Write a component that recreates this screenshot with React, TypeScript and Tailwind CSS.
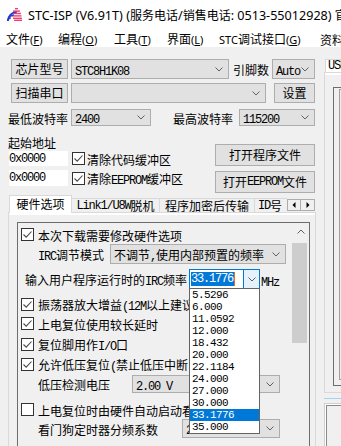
import React from "react";

const CJK_SPLIT = /([\u2E80-\u9FFF\uFF00-\uFFEF\u3000-\u303F]+)/;
const CJK_TEST = /[\u2E80-\u9FFF\uFF00-\uFFEF\u3000-\u303F]/;

function T({
  s,
  cjk = "font-['Noto_Sans_CJK_SC',sans-serif] text-[12px]",
  lat = "font-['Liberation_Mono',monospace] text-[12px] tracking-[-1.2px]",
}: {
  s: string;
  cjk?: string;
  lat?: string;
}) {
  const parts = s.split(CJK_SPLIT).filter((p) => p.length > 0);
  return (
    <>
      {parts.map((p, i) =>
        CJK_TEST.test(p) ? (
          <span key={i} className={cjk}>
            {p}
          </span>
        ) : (
          <span key={i} className={lat + " whitespace-pre"}>
            {p}
          </span>
        )
      )}
    </>
  );
}

function Chev({ up = false }: { up?: boolean }) {
  return (
    <svg width="8" height="5" viewBox="0 0 8 5" className="shrink-0">
      <path
        d={up ? "M0.5 4.5 L4 1 L7.5 4.5" : "M0.5 0.5 L4 4 L7.5 0.5"}
        fill="none"
        stroke="#606060"
        strokeWidth="1"
      />
    </svg>
  );
}

function Box({ checked = true, className = "" }: { checked?: boolean; className?: string }) {
  return (
    <div className={"w-[13px] h-[13px] border border-[#333333] bg-white shrink-0 " + className}>
      {checked && (
        <svg width="11" height="11" viewBox="0 0 11 11">
          <path d="M1.5 5.5 L4.2 8.2 L9.5 2.5" fill="none" stroke="#4a4a4a" strokeWidth="1.1" />
        </svg>
      )}
    </div>
  );
}

function Btn({ children, className = "" }: { children: React.ReactNode; className?: string }) {
  return (
    <div
      className={
        "bg-[#e1e1e1] border border-[#adadad] flex items-center justify-center whitespace-nowrap shrink-0 " +
        className
      }
    >
      {children}
    </div>
  );
}

function Combo({ text, className = "" }: { text: string; className?: string }) {
  return (
    <div
      className={
        "bg-[#e1e1e1] border border-[#adadad] flex items-center justify-between pl-[3px] pr-[5px] whitespace-nowrap overflow-hidden shrink-0 " +
        className
      }
    >
      <span className="leading-none">
        <T s={text} />
      </span>
      <Chev />
    </div>
  );
}

function CB({ s, checked = true, className = "" }: { s: string; checked?: boolean; className?: string }) {
  return (
    <div className={"flex items-center h-[13px] whitespace-nowrap " + className}>
      <Box checked={checked} className="ml-[3px]" />
      <span className="ml-[4px] leading-none">
        <T s={s} />
      </span>
    </div>
  );
}

function Logo() {
  return (
    <svg width="15" height="13" viewBox="0 0 15 13" className="ml-[7px] shrink-0">
      <g fill="#f0406e">
        <rect x="8" y="0" width="3" height="1.4" />
        <rect x="6" y="2.4" width="7" height="1.4" />
        <rect x="4.5" y="4.8" width="9.5" height="1.4" />
        <rect x="4.5" y="7.2" width="10" height="1.4" />
        <rect x="6" y="9.6" width="9" height="1.4" />
        <rect x="7" y="11.6" width="8" height="1.4" />
      </g>
      <g fill="none" stroke="#1e3ed0" strokeWidth="1.5">
        <path d="M0.8 13 A3 3 0 0 1 3.8 10" />
        <path d="M0.8 13 A6 6 0 0 1 6.8 7" />
        <path d="M0.8 13 A9 9 0 0 1 9.8 4" />
      </g>
    </svg>
  );
}

const menuC = "font-['Noto_Sans_CJK_SC',sans-serif] text-[12px]";
const menuL = "font-['Noto_Sans',sans-serif] text-[11px]";
const listL = "font-['Liberation_Mono',monospace] text-[11px] tracking-[-0.6px] leading-[12px]";

function MenuItem({ label, k, className }: { label: string; k: string; className: string }) {
  return (
    <div className={"flex items-center whitespace-nowrap leading-none shrink-0 " + className}>
      <T s={label} cjk={menuC} lat={menuL} />
      <span className={menuL}>
        (<span className="underline">{k}</span>)
      </span>
    </div>
  );
}

const freqs = [
  "5.5296",
  "6.000",
  "11.0592",
  "12.000",
  "18.432",
  "20.000",
  "22.1184",
  "24.000",
  "27.000",
  "30.000",
  "33.1776",
  "35.000",
];

export default function App() {
  return (
    <div className="w-[341px] h-[446px] overflow-hidden bg-[#f0f0f0] relative flex flex-col text-black">
      {/* Title bar */}
      <div className="h-[28px] bg-white flex items-center whitespace-nowrap overflow-hidden shrink-0">
        <Logo />
        <span className="ml-[6px] leading-none">
          <T
            s="STC-ISP (V6.91T) (服务电话/销售电话: 0513-55012928) 官方网站"
            cjk="font-['Noto_Sans_CJK_SC',sans-serif] text-[12px]"
            lat="font-['Noto_Sans',sans-serif] text-[12.6px]"
          />
        </span>
      </div>

      {/* Menu bar */}
      <div className="h-[19px] bg-white flex items-center pl-[6px] pt-[3px] whitespace-nowrap overflow-hidden shrink-0">
        <MenuItem label="文件" k="F" className="w-[52px]" />
        <MenuItem label="编程" k="O" className="w-[56px]" />
        <MenuItem label="工具" k="T" className="w-[53px]" />
        <MenuItem label="界面" k="L" className="w-[52px]" />
        <MenuItem label="STC调试接口" k="G" className="w-[101px]" />
        <div className="shrink-0 leading-none">
          <T s="资料" cjk={menuC} lat={menuL} />
        </div>
      </div>

      {/* Body */}
      <div className="flex flex-1 min-h-0">
        {/* Left column */}
        <div className="w-[316px] flex flex-col shrink-0">
          {/* Row 1 */}
          <div className="flex items-center h-[20px] mt-[12px]">
            <Btn className="ml-[11px] w-[57px] h-[20px]">
              <T s="芯片型号" />
            </Btn>
            <Combo text="STC8H1K08" className="ml-[3px] w-[158px] h-[20px]" />
            <span className="ml-[4px] w-[36px] leading-none whitespace-nowrap">
              <T s="引脚数" />
            </span>
            <Combo text="Auto" className="ml-[3px] w-[43px] h-[20px]" />
          </div>

          {/* Row 2 */}
          <div className="flex items-center h-[20px] mt-[4px]">
            <Btn className="ml-[11px] w-[57px] h-[20px]">
              <T s="扫描串口" />
            </Btn>
            <Combo text="" className="ml-[3px] w-[195px] h-[20px]" />
            <Btn className="ml-[8px] w-[41px] h-[20px]">
              <T s="设置" />
            </Btn>
          </div>

          {/* Row 3 */}
          <div className="flex items-center h-[17px] mt-[6px]">
            <span className="ml-[8px] w-[60px] leading-none whitespace-nowrap">
              <T s="最低波特率" />
            </span>
            <Combo text="2400" className="ml-[3px] w-[80px] h-[17px]" />
            <span className="ml-[22px] w-[60px] leading-none whitespace-nowrap">
              <T s="最高波特率" />
            </span>
            <Combo text="115200" className="ml-[6px] w-[76px] h-[17px]" />
          </div>

          {/* Section 4 */}
          <div className="flex mt-[10px]">
            <div className="ml-[8px] w-[207px] flex flex-col">
              <div className="h-[14px] flex items-center leading-none">
                <T s="起始地址" />
              </div>
              <div className="flex items-center mt-[1px] h-[15px]">
                <div className="ml-[1px] w-[59px] h-[15px] bg-white flex items-center leading-none">
                  <T s="0x0000" />
                </div>
                <Box className="ml-[4px]" />
                <span className="ml-[2px] leading-none whitespace-nowrap">
                  <T s="清除代码缓冲区" />
                </span>
              </div>
              <div className="flex items-center mt-[4px] h-[16px]">
                <div className="ml-[1px] w-[59px] h-[16px] bg-white flex items-center leading-none">
                  <T s="0x0000" />
                </div>
                <Box className="ml-[4px]" />
                <span className="ml-[2px] leading-none whitespace-nowrap">
                  <T s="清除EEPROM缓冲区" />
                </span>
              </div>
            </div>
            <div className="w-[100px] flex flex-col pt-[8px] gap-[5px]">
              <Btn className="h-[22px] w-[100px]">
                <T s="打开程序文件" />
              </Btn>
              <Btn className="h-[22px] w-[100px]">
                <T s="打开EEPROM文件" />
              </Btn>
            </div>
          </div>

          {/* Tabs */}
          <div className="flex items-end h-[18px] -mb-[1px] mt-[2px] ml-[9px] relative z-10 whitespace-nowrap">
            <div className="w-[63px] h-[18px] bg-white border border-b-0 border-[#d9d9d9] flex items-center justify-center pb-[1px] leading-none shrink-0">
              <T s="硬件选项" />
            </div>
            <div className="w-[88px] h-[14px] mb-[1px] border-t border-r border-[#d9d9d9] flex items-center justify-center leading-none shrink-0">
              <T s="Link1/U8W脱机" />
            </div>
            <div className="w-[95px] h-[14px] mb-[1px] border-t border-r border-[#d9d9d9] flex items-center justify-center leading-none shrink-0">
              <T s="程序加密后传输" />
            </div>
            <div className="w-[32px] h-[14px] mb-[1px] border-t border-[#d9d9d9] flex items-center pl-[3px] overflow-hidden leading-none shrink-0">
              <T s="ID号" />
            </div>
            <div className="flex h-[12px] mb-[2px] shrink-0">
              <div className="w-[14px] h-[12px] bg-[#f0f0f0] border border-[#adadad] flex items-center justify-center">
                <svg width="4" height="6" viewBox="0 0 4 6">
                  <path d="M3.5 0 L0.5 3 L3.5 6 Z" fill="#000" />
                </svg>
              </div>
              <div className="w-[14px] h-[12px] bg-[#f0f0f0] border border-l-0 border-[#adadad] flex items-center justify-center">
                <svg width="4" height="6" viewBox="0 0 4 6">
                  <path d="M0.5 0 L3.5 3 L0.5 6 Z" fill="#000" />
                </svg>
              </div>
            </div>
          </div>

          {/* Tab pane */}
          <div className="ml-[8px] w-[308px] h-[260px] shrink-0 border border-[#d9d9d9] bg-white flex flex-col">
            <div className="mt-[2px] flex-1 bg-[#f0f0f0] pl-[8px] pt-[7px] flex flex-col">
              <div className="w-[293px] flex-1 border border-[#6d6d6d] flex">
                <div className="w-[274px] flex flex-col">
                  <CB s="本次下载需要修改硬件选项" className="mt-[5px]" />
                  <div className="flex items-center h-[20px] mt-[3px] whitespace-nowrap">
                    <span className="ml-[20px] w-[72px] leading-none">
                      <T s="IRC调节模式" />
                    </span>
                    <Combo text="不调节,使用内部预置的频率" className="w-[176px] h-[20px]" />
                  </div>
                  <div className="flex items-center h-[20px] mt-[5px] whitespace-nowrap">
                    <span className="ml-[7px] w-[164px] leading-none">
                      <T s="输入用户程序运行时的IRC频率" />
                    </span>
                    <div className="w-[71px] h-[20px] border border-[#0078d7] bg-white flex shrink-0">
                      <div className="flex-1 flex items-center pl-[1px]">
                        <span className="bg-[#0078d7] text-white leading-none h-[14px] flex items-center pr-[1px]">
                          <T s="33.1776" />
                        </span>
                        <span className="w-[1px] h-[14px] bg-[#e07020]" />
                      </div>
                      <div className="w-[16px] bg-[#e5f1fb] border-l border-[#0078d7] flex items-center justify-center">
                        <Chev />
                      </div>
                    </div>
                    <span className="ml-[1px] leading-none mt-[3px]">
                      <T s="MHz" />
                    </span>
                  </div>
                  <CB s="振荡器放大增益(12M以上建议选择)" className="mt-[9px]" />
                  <CB s="上电复位使用较长延时" className="mt-[6px]" />
                  <CB s="复位脚用作I/O口" className="mt-[8px]" />
                  <CB s="允许低压复位(禁止低压中断)" className="mt-[7px]" />
                  <div className="flex items-center h-[18px] mt-[4px] whitespace-nowrap">
                    <span className="ml-[20px] w-[94px] leading-none">
                      <T s="低压检测电压" />
                    </span>
                    <Combo text="2.00 V" className="w-[148px] h-[18px]" />
                  </div>
                  <CB s="上电复位时由硬件自动启动看门狗" checked={false} className="mt-[10px]" />
                  <div className="flex items-center h-[19px] mt-[3px] whitespace-nowrap">
                    <span className="ml-[20px] w-[144px] leading-none">
                      <T s="看门狗定时器分频系数" />
                    </span>
                    <Combo text="256" className="w-[98px] h-[19px]" />
                  </div>
                </div>
                {/* Scrollbar */}
                <div className="w-[17px] flex flex-col bg-[#f0f0f0]">
                  <div className="h-[17px] flex items-center justify-center">
                    <Chev up />
                  </div>
                  <div className="mt-[3px] h-[100px] w-[15px] bg-[#cdcdcd]" />
                </div>
              </div>
            </div>
          </div>
        </div>

        {/* Right column */}
        <div className="flex-1 flex flex-col min-w-0 overflow-hidden">
          <div className="ml-[9px] mt-[12px] h-[13px] border-t border-l border-[#d9d9d9] bg-white pl-[2px] flex items-center leading-none whitespace-nowrap shrink-0">
            <T s="USB" />
          </div>
          <div className="ml-[8px] h-[321px] border-l border-t border-b border-[#d9d9d9] bg-white flex flex-col shrink-0">
            <div className="mt-[2px] flex-1 bg-[#f0f0f0] flex flex-col">
              <div className="ml-[8px] mt-[12px] h-[299px] border-l border-t border-b border-[#6d6d6d] pl-[5px] pt-[1px] flex flex-col">
                <div className="h-[291px] border-l border-t border-b border-[#a0a0a0]" />
              </div>
            </div>
          </div>
          <div className="mt-[5px] ml-[8px] h-[1px] bg-[#a6d2f2] shrink-0" />
          <div className="mt-[4px] ml-[8px] h-[60px] border-l border-t border-[#cfcfcf] bg-white pl-[1px] pt-[1px] shrink-0">
            <div className="h-full border-l border-t border-[#8a8a8a] bg-[#f0f0f0]" />
          </div>
        </div>
      </div>

      {/* Dropdown list overlay */}
      <div className="absolute left-[189px] top-[288px] w-[71px] border border-[#646464] bg-white flex flex-col z-20">
        {freqs.map((f) => (
          <div
            key={f}
            className={
              f === "33.1776"
                ? "h-[12px] bg-[#0078d7] text-white flex items-center pl-[2px] leading-none overflow-hidden"
                : "h-[12px] flex items-center pl-[2px] leading-none overflow-hidden"
            }
          >
            <T s={f} lat={listL} />
          </div>
        ))}
      </div>
    </div>
  );
}
